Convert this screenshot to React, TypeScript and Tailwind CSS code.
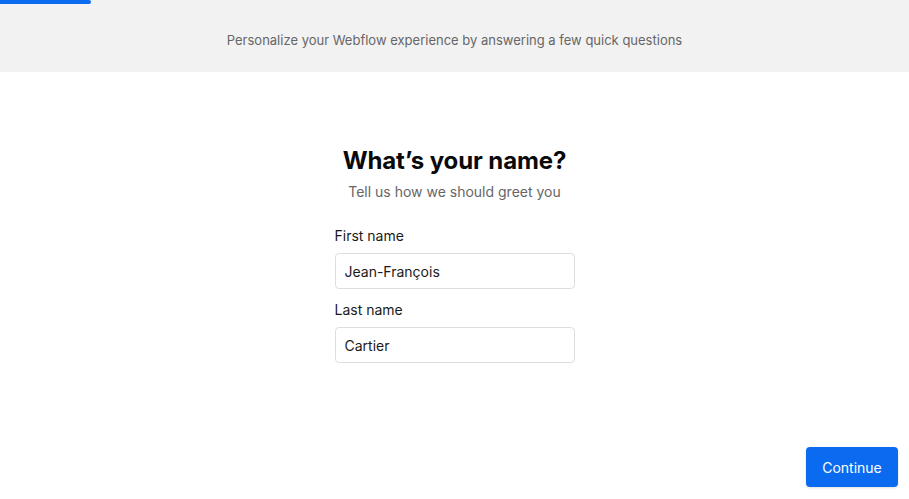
export default function App() {
  return (
    <div className="h-[499px] w-full flex flex-col bg-white font-['Inter','Liberation_Sans',sans-serif]">
      <header className="relative h-[72px] bg-[#f2f2f2] flex items-center justify-center pt-[10px]">
        <div className="absolute top-0 left-0 h-[4px] w-[91px] bg-[#0a6bf0] rounded-r-full" />
        <p className="text-[13px] text-[#666666]">
          Personalize your Webflow experience by answering a few quick questions
        </p>
      </header>

      <main className="flex-1 flex flex-col items-center pt-[74px]">
        <h1 className="text-[24px] leading-[30px] font-bold text-[#0a0a0a] tracking-[-0.1px]">
          What’s your name?
        </h1>
        <p className="mt-[6px] text-[14px] leading-[20px] text-[#666666]">
          Tell us how we should greet you
        </p>

        <form className="mt-[24px] w-[240px] flex flex-col">
          <label className="text-[14px] leading-[20px] text-[#1a1a1a]">First name</label>
          <input
            defaultValue="Jean-François"
            className="mt-[7px] h-[36px] w-full rounded-[4px] border border-[#dedede] px-[9px] text-[14px] text-[#1a1a1a] outline-none"
          />
          <label className="mt-[11px] text-[14px] leading-[20px] text-[#1a1a1a]">Last name</label>
          <input
            defaultValue="Cartier"
            className="mt-[7px] h-[36px] w-full rounded-[4px] border border-[#dedede] px-[9px] text-[14px] text-[#1a1a1a] outline-none"
          />
        </form>
      </main>

      <footer className="flex justify-end pr-[11px] pb-[12px]">
        <button className="h-[40px] w-[92px] rounded-[4px] bg-[#0a6bf0] text-[14px] text-white shadow-sm">
          Continue
        </button>
      </footer>
    </div>
  );
}
